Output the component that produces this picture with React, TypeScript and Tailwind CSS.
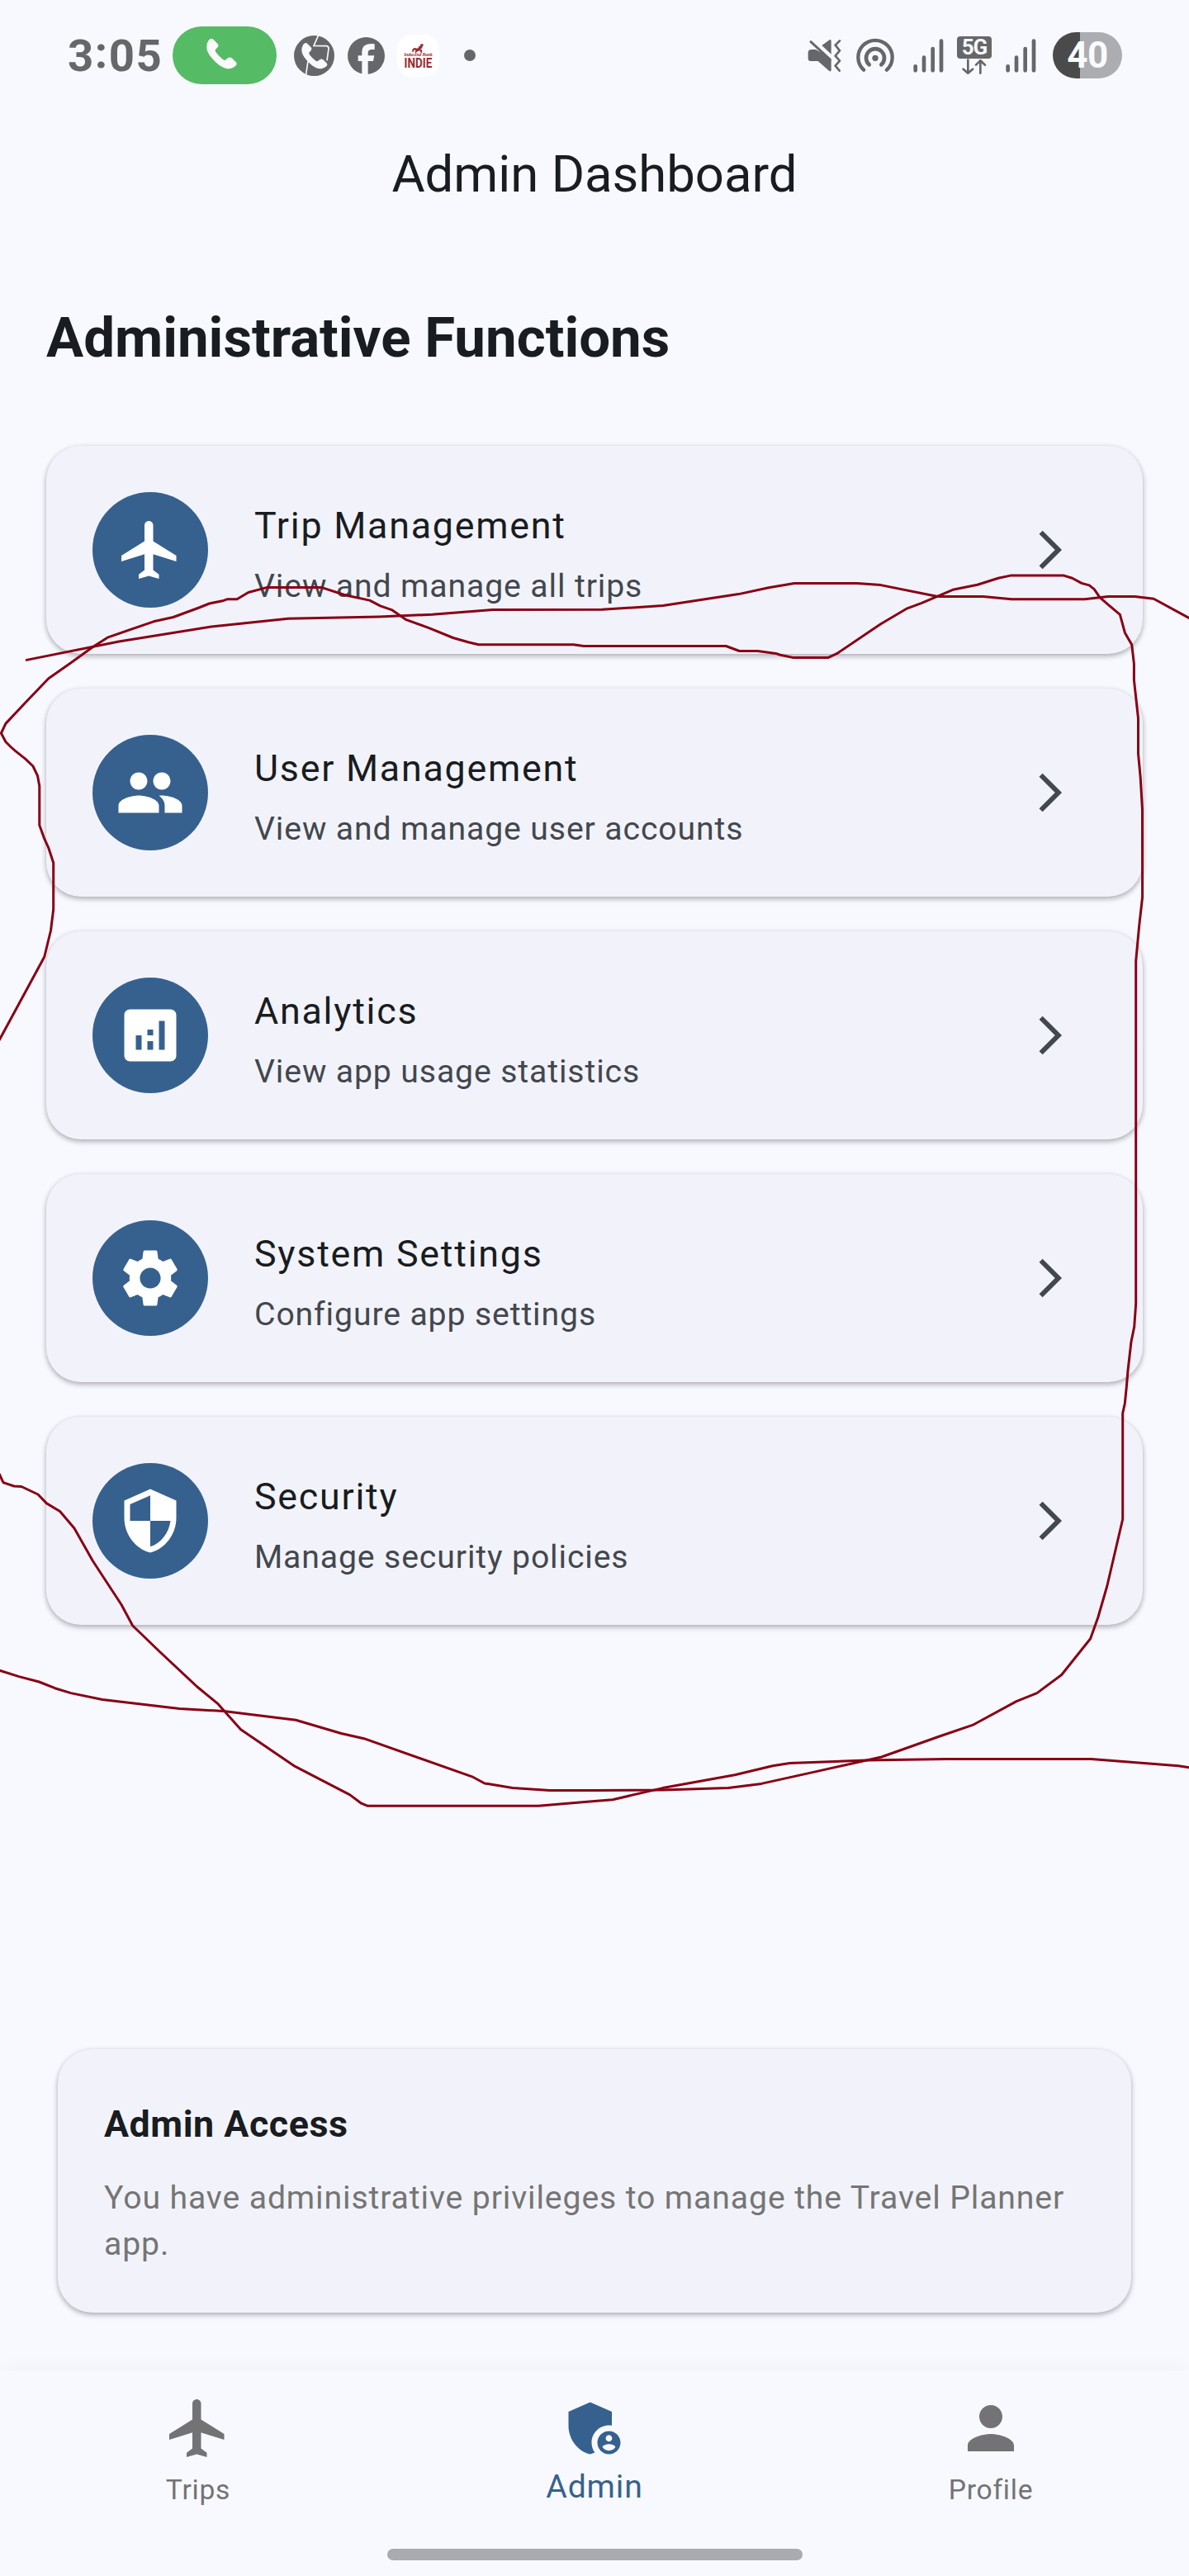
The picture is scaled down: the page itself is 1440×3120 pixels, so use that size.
import type { ReactNode } from "react";
import {
  MdAdminPanelSettings,
  MdAnalytics,
  MdArrowForwardIos,
  MdFlight,
  MdPeople,
  MdPerson,
  MdSecurity,
  MdSettings,
} from "react-icons/md";

const HANDSET =
  "M37 56 Q47 46 55 54 L71 70 Q76 76 70 83 L63 90 Q60 95 64 101 Q75 116 91 128 Q97 132 102 127 L108 122 Q116 117 123 122 L139 138 Q143 144 138 150 Q124 162 106 162 Q84 158 60 134 Q33 108 30 86 Q29 68 37 56Z";

function SignalBars() {
  return (
    <svg width="37" height="41" viewBox="0 0 111 123" fill="#666769">
      <rect x="1" y="93" width="14" height="29" rx="7" />
      <rect x="32" y="61" width="14" height="61" rx="7" />
      <rect x="64" y="29" width="14" height="93" rx="7" />
      <rect x="95" y="1" width="14" height="121" rx="7" />
    </svg>
  );
}

function StatusBar() {
  return (
    <div className="flex h-[134px] items-center justify-between pr-[81px] pl-[82px]">
      <div className="flex items-center">
        <div className="flex w-[127px] items-center text-[54.500px] leading-[70px] font-bold tracking-[1.500px] text-[#666769]">
          <span>3</span>
          <span className="relative -top-1">:</span>
          <span>05</span>
        </div>
        <div className="flex h-[70px] w-[126px] items-center justify-center rounded-full bg-[#55bb65]">
          <svg className="-mt-1 -ml-[7px]" width="37" height="38" viewBox="29 49 113 114" fill="#fafafa">
            <path d={HANDSET} />
          </svg>
        </div>
        <svg className="ml-[21px]" width="49" height="49" viewBox="348 39 147 147">
          <circle cx="421.500" cy="112.500" r="73.500" fill="#666769" />
          <g fill="none" stroke="#f8f9ff" strokeWidth="5">
            <path d="M437 38 L420 76 L466 77 Q475 79 474 87 L468 130" />
            <path d="M399 132 L391 186" />
          </g>
          <path d={HANDSET} fill="#f8f9ff" transform="translate(351 24) scale(0.84)" />
        </svg>
        <svg className="ml-4" width="45" height="45" viewBox="543 45 135 135">
          <circle cx="610.500" cy="112.500" r="67.500" fill="#666769" />
          <path
            d="M595 181V132H581V112H595V100Q595 69 629 69Q636 69 641 70V90H631Q617 90 617 102V112H640L636 132H617V181Z"
            fill="#f8f9ff"
          />
        </svg>
        <div className="ml-[15px] flex h-[51px] w-[51px] flex-col items-center rounded-[18px] bg-white pt-[11px] text-[#9b2a31]">
          <svg width="15" height="11" viewBox="0 0 45 33" fill="#9b2a31">
            <path d="M30 2 L38 0 L42 5 L38 10 L36 17 L30 18 L36 23 L37 32 L32 32 L29 25 L21 27 L15 32 L9 31 L14 25 L8 22 L5 29 L0 30 L2 19 L9 15 L20 17 L25 12 L24 8 L31 8Z" />
          </svg>
          <div className="h-[5px] font-['Liberation_Serif'] text-[5.500px] leading-[5px] font-bold whitespace-nowrap italic">
            IndusInd Bank
          </div>
          <div className="origin-top scale-y-[1.22] text-[13.500px] leading-[12px] font-bold">INDIE</div>
        </div>
        <div className="ml-[30px] h-[14px] w-[14px] rounded-full bg-[#666769]" />
      </div>

      <div className="flex items-center">
        <svg width="42" height="42" viewBox="112 108 126 126" fill="#666769">
          <path d="M114 162Q114 150 126 150H142L160 160L198 186V224Q198 232 191 228L150 192H126Q114 192 114 182Z" />
          <path d="M164 135L192 115Q198 112 198 119V167Z" />
          <path d="M124 122L194 186" stroke="#666769" strokeWidth="9" strokeLinecap="round" />
          <path
            d="M229 118L213 134L229 154L213 173L229 191L213 209L228 227"
            fill="none"
            stroke="#666769"
            strokeWidth="8"
            strokeLinecap="round"
            strokeLinejoin="round"
          />
        </svg>
        <svg className="ml-[17px]" width="46" height="42" viewBox="291 109 138 126">
          <circle cx="360" cy="182" r="11" fill="#666769" />
          <g fill="none" stroke="#666769" strokeWidth="13" strokeLinecap="round">
            <path d="M318 225A62 62 0 1 1 402 225" />
            <path d="M338 206A33 33 0 1 1 382 206" strokeWidth="14" />
          </g>
        </svg>
        <div className="ml-[23px]">
          <SignalBars />
        </div>
        <div className="ml-4 flex w-[42px] flex-col items-center">
          <div className="flex h-[27px] w-[42px] items-center justify-center rounded-[4px] bg-[#666769] text-[26px] leading-[27px] font-bold tracking-[-1px] text-[#f8f9ff]">
            5G
          </div>
          <svg
            width="30"
            height="19"
            viewBox="675 179 90 57"
            fill="none"
            stroke="#666769"
            strokeWidth="8"
            strokeLinecap="round"
            strokeLinejoin="round"
          >
            <path d="M697 184V232M680 217L697 232L714 217" />
            <path d="M742 232V186M726 202L742 186L759 202" />
          </svg>
        </div>
        <div className="ml-[17px]">
          <SignalBars />
        </div>
        <div className="ml-5 flex h-14 w-[84px] items-center justify-center rounded-full bg-linear-to-r from-[#4a4a4b] from-[39.300%] to-[#acadb1] to-[39.300%] text-[44px] leading-[56px] font-bold tracking-[-0.5px] text-[#fafbff]">
          40
        </div>
      </div>
    </div>
  );
}

const CARD =
  "rounded-[42px] bg-[#f2f3fa] shadow-[0_3px_6px_rgba(0,0,0,0.24),0_1px_6px_rgba(0,0,0,0.1)]";

function FunctionCard({ icon, title, subtitle }: { icon: ReactNode; title: string; subtitle: string }) {
  return (
    <div className={`flex h-[252px] items-center pr-[84px] pl-14 ${CARD}`}>
      <div className="flex h-[140px] w-[140px] items-center justify-center rounded-full bg-[#36618e] text-[84px] text-white">
        {icon}
      </div>
      <div className="ml-14 flex-1 pt-[9px]">
        <div className="text-[44.800px] leading-[67px] tracking-[1.750px] text-[#191c20]">{title}</div>
        <div className="mt-3 text-[39.200px] leading-[56px] tracking-[0.875px] text-[#43474e]">{subtitle}</div>
      </div>
      <MdArrowForwardIos className="text-[56px] text-[#43474e]" />
    </div>
  );
}

const FUNCTIONS = [
  { icon: <MdFlight />, title: "Trip Management", subtitle: "View and manage all trips" },
  { icon: <MdPeople />, title: "User Management", subtitle: "View and manage user accounts" },
  { icon: <MdAnalytics />, title: "Analytics", subtitle: "View app usage statistics" },
  { icon: <MdSettings />, title: "System Settings", subtitle: "Configure app settings" },
  { icon: <MdSecurity />, title: "Security", subtitle: "Manage security policies" },
];

function PenStrokes() {
  return (
    <svg
      className="pointer-events-none absolute inset-0"
      width="1440"
      height="3120"
      viewBox="0 0 1440 3120"
      fill="none"
      stroke="#880015"
      strokeWidth="3"
      strokeLinejoin="round"
    >
      <polyline points="31,799.6 144,777 256,759 349,749.3 459,747 523.5,744.3 597,738.6 729,738.2 803,733.6 894.5,719.6 931,711.8 962,706.4 1038,706.4 1066.7,708.6 1135.6,722.5 1190.7,722.5 1225,725.7 1313.7,725.7 1342,722.5 1374.4,722.5 1397.3,725.3 1441,749" />
      <polyline points="-1,1260 53.7,1159 61.5,1127 64.7,1101.4 64.7,1045 58.8,1027 53.7,1015.7 47.8,999.6 47.8,952 45.5,939.6 40,928 31,919.3 18.4,909.3 12.4,904 6.9,898.5 1.4,888 6.9,876.4 31,850.7 58.8,821.8 85.9,802.8 112.5,783.5 131,771.8 186,752.8 209.9,747.5 241,736 253.5,731 269.5,727.8 275.5,725.7 287,725.7 300.8,717.5 323.7,711.4 389,711.4 417.9,720.7 447.7,727.1 460.6,733.9 474.3,738.6 491.3,750.3 518.9,760.3 548.7,772.5 567,777.8 579.5,780.7 694.7,780.7 707,782.5 879.3,782.5 895.4,788.5 917.5,788.5 939.5,791.4 945,793.2 960,796.4 1003.3,796.4 1013.9,791.4 1066.7,755.7 1098.8,736.8 1116.3,730.3 1153.9,714.3 1183.8,708.2 1209,700.3 1223.7,697.1 1288.5,697.1 1298.6,700.3 1310,706.4 1319.2,708.9 1325.2,713.6 1332,723.6 1343.6,733.6 1356.4,744.3 1362.4,766.4 1370.7,780.7 1373.4,803.9 1373.4,823.6 1378.5,870 1378.5,912.8 1381.2,941.4 1383.5,980.7 1383.6,1086.5 1379.7,1121 1375.7,1164 1375.7,1579 1373.7,1607 1370,1625 1366,1660 1364.3,1680 1362.3,1700 1359.7,1711.7 1359.7,1840 1340.8,1921 1329.8,1959 1320.6,1984.8 1285.7,2028.5 1255.9,2050.6 1231,2060.6 1179.2,2088.8 1137.9,2103 1067.6,2128 988.6,2145.6 922,2160.4 882,2165.6 802.7,2168 720,2168.6 665.8,2168.4 620.8,2165.6 592.4,2160.8 586.9,2160 571.7,2151.8 440.8,2105.7 413.3,2099.5 358.2,2083.3 271,2072.6 217.2,2069.5 124,2058.5 85.9,2050.6 66.6,2044.7 47.3,2037 23,2030.6 -1,2023" />
      <polyline points="-1,1785 4,1795.7 17,1800 26,1800.5 46,1810 56.5,1820.9 72.6,1830.5 90,1851 112.5,1890.8 147,1943.5 160.7,1969 195,2002 238.8,2043 264,2063.7 291.6,2094.7 357.3,2139.4 423.8,2173.9 437.6,2184.2 445.4,2187.3 652,2187.3 720,2181.5 742,2179.7 802.7,2165.6 889.9,2149.8 935.8,2138.7 956.5,2135.6 1050,2132 1147,2130.5 1321.5,2130.5 1427,2138.8 1441,2141" />
    </svg>
  );
}

export default function App() {
  return (
    <div className="relative flex h-[3120px] w-[1440px] flex-col overflow-hidden bg-[#f8f9ff] font-[Roboto,sans-serif]">
      <StatusBar />
      <h1 className="mt-[41px] text-center text-[61.600px] leading-[72px] text-[#191c20]">Admin Dashboard</h1>

      <main className="flex flex-col px-14">
        <h2 className="mt-[122px] text-[67.200px] leading-[80px] font-bold text-[#191c20]">
          Administrative Functions
        </h2>
        <div className="mt-[91px] flex flex-col gap-[42px]">
          {FUNCTIONS.map((item) => (
            <FunctionCard key={item.title} {...item} />
          ))}
        </div>
        <section className={`mx-3.5 mt-[514px] h-[319px] px-14 pt-[57px] ${CARD}`}>
          <h3 className="text-[44.800px] leading-[67px] font-bold tracking-[0.525px] text-[#191c20]">Admin Access</h3>
          <p className="mt-7 text-[39.200px] leading-[56px] tracking-[0.875px] text-[#757575]">
            You have administrative privileges to manage the Travel Planner app.
          </p>
        </section>
      </main>

      <nav className="mt-[70px] flex h-[249px] flex-col justify-between bg-[#f8f9ff] pb-[19px] shadow-[0_-4px_20px_rgba(0,0,0,0.03)]">
        <div className="grid grid-cols-3 pt-7 text-[#737375]">
          <div className="flex flex-col items-center">
            <MdFlight className="text-[84px]" />
            <span className="mt-[13px] text-[33.600px] leading-10 tracking-[0.750px]">Trips</span>
          </div>
          <div className="flex flex-col items-center text-[#36618e]">
            <MdAdminPanelSettings className="text-[84px]" />
            <span className="mt-[6px] text-[39.200px] leading-[46px] tracking-[0.875px]">Admin</span>
          </div>
          <div className="flex flex-col items-center">
            <MdPerson className="text-[84px]" />
            <span className="mt-[13px] text-[33.600px] leading-10 tracking-[0.750px]">Profile</span>
          </div>
        </div>
        <div className="h-3.5 w-[503px] self-center rounded-full bg-[#aaabb0]" />
      </nav>

      <PenStrokes />
    </div>
  );
}
